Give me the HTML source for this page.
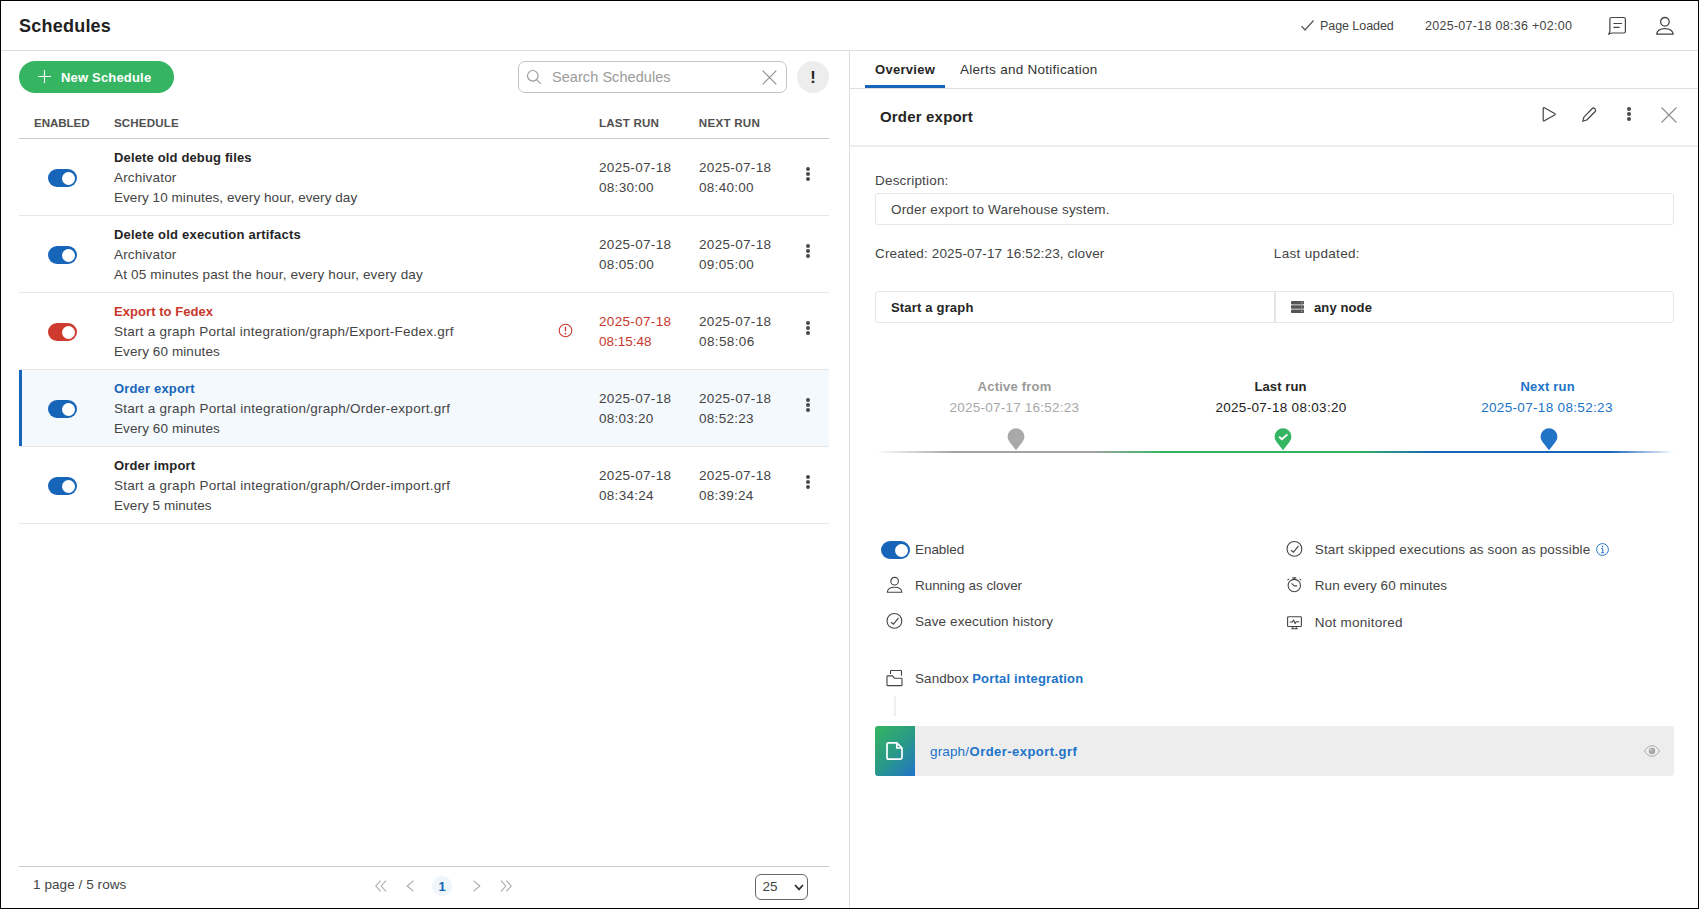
<!DOCTYPE html>
<html lang="en">
<head>
<meta charset="utf-8">
<title>Schedules</title>
<style>
*{box-sizing:border-box;margin:0;padding:0}
html,body{width:1699px;height:909px;overflow:hidden;background:#fff}
body{font-family:"Liberation Sans",sans-serif;font-size:13px;color:#3c3c3c;position:relative}
#frame{position:absolute;left:0;top:0;width:1699px;height:909px;border:1px solid #000;z-index:50;pointer-events:none}
.a{position:absolute}
.t{position:absolute;white-space:nowrap;line-height:20px;height:20px;font-size:13.5px;color:#444}
.b{font-weight:bold;color:#252525;font-size:13px}
.c{text-align:center}
.hl{position:absolute;height:1px;background:#e6e6e6}
svg{position:absolute;overflow:visible}
/* header */
#hdr{position:absolute;left:0;top:0;width:1699px;height:51px;border-bottom:1px solid #dedede}
/* left */
#vdiv{position:absolute;left:849px;top:51px;width:1px;height:858px;background:#dedede}
.btn-new{position:absolute;left:19px;top:61px;width:155px;height:32px;border-radius:16px;background:#35b561}
.search{position:absolute;left:518px;top:61px;width:269px;height:32px;border:1px solid #c4c4c4;border-radius:7px;background:#fff}
.bang{position:absolute;left:797px;top:61px;width:32px;height:32px;border-radius:16px;background:#ededed}
.th{position:absolute;top:113px;font-size:11.6px;font-weight:bold;color:#505050;line-height:20px;white-space:nowrap}
.row{position:absolute;left:19px;width:810px;height:77px;border-bottom:1px solid #e6e6e6}
.row.sel{background:#f4f9fd}
.row.sel:before{content:"";position:absolute;left:0;top:0;width:3px;height:76px;background:#1765b9}
.tg{position:absolute;width:29px;height:18px;border-radius:9px;background:#1765b9}
.tg:after{content:"";position:absolute;right:2.5px;top:2.5px;width:13px;height:13px;border-radius:6.5px;background:#fff}
.tg.red{background:#cf3a2e}
.kb{position:absolute;width:4px;height:4px;border-radius:2px;background:#4a4a4a}
</style>
</head>
<body>
<div id="frame"></div>

<!-- ===== HEADER ===== -->
<div id="hdr">
  <div class="t b" style="left:19px;top:15px;font-size:18px;line-height:22px;height:22px;color:#222;letter-spacing:0.23px">Schedules</div>
  <svg style="left:1300px;top:19px" width="15" height="13" viewBox="0 0 15 13"><path d="M1.5 7.2 L5 11 L13.5 1.5" fill="none" stroke="#555" stroke-width="1.2"/></svg>
  <div class="t" style="left:1320px;top:16px;font-size:12.5px;letter-spacing:-0.06px">Page Loaded</div>
  <div class="t" style="left:1425px;top:16px;font-size:12.5px;letter-spacing:0.28px">2025-07-18 08:36 +02:00</div>
  <svg style="left:1607px;top:16px" width="20" height="20" viewBox="0 0 20 20"><path d="M4.4 1.5 H16.9 Q18.4 1.5 18.4 3 V15.5 Q18.4 17 16.9 17 H6 Q4 17 1.6 18.3 Q2.9 16.5 2.9 14.5 V3 Q2.9 1.5 4.4 1.5 Z" fill="none" stroke="#444" stroke-width="1.2" stroke-linejoin="round"/><path d="M6.4 7.5 H15 M6.4 11.4 H12.6" stroke="#444" stroke-width="1.2" fill="none"/></svg>
  <svg style="left:1655px;top:16px" width="20" height="20" viewBox="0 0 20 20"><circle cx="9.9" cy="5.8" r="4.3" fill="none" stroke="#444" stroke-width="1.3"/><path d="M1.6 18.1 C2.2 14.6 5.6 12.6 9.9 12.6 C14.2 12.6 17.6 14.6 18.2 18.1 Z" fill="none" stroke="#444" stroke-width="1.3" stroke-linejoin="round"/></svg>
</div>

<!-- ===== LEFT PANEL ===== -->
<div id="vdiv"></div>
<div class="btn-new">
  <svg style="left:18px;top:9px" width="14" height="14" viewBox="0 0 14 14"><path d="M7.5 0 V13 M1 6.5 H14" stroke="#fff" stroke-width="1.15" fill="none"/></svg>
  <div class="t b" style="left:42px;top:7px;color:#fff;letter-spacing:0.18px">New Schedule</div>
</div>
<div class="search">
  <svg style="left:7.2px;top:7.4px" width="17" height="17" viewBox="0 0 17 17"><circle cx="6.8" cy="6.8" r="5.3" fill="none" stroke="#9c9c9c" stroke-width="1.2"/><path d="M10.6 10.6 L14.8 14.8" stroke="#9c9c9c" stroke-width="1.2"/></svg>
  <div class="t" style="left:33px;top:5px;font-size:14.5px;color:#9b9b9b;letter-spacing:0.06px">Search Schedules</div>
  <svg style="left:243px;top:8px" width="15" height="15" viewBox="0 0 15 15"><path d="M0.7 0.7 L14.3 14.3 M14.3 0.7 L0.7 14.3" stroke="#8c8c8c" stroke-width="1.1"/></svg>
</div>
<div class="bang"><div class="t b" style="left:0;width:32px;text-align:center;top:6px;font-size:16.5px;color:#222">!</div></div>

<div class="th" style="left:34px;letter-spacing:-0.07px">ENABLED</div>
<div class="th" style="left:114px;letter-spacing:0.13px">SCHEDULE</div>
<div class="th" style="left:599px;letter-spacing:0.19px">LAST RUN</div>
<div class="th" style="left:698.8px;letter-spacing:0.25px">NEXT RUN</div>
<div class="hl" style="left:19px;top:138px;width:810px;background:#c9c9c9"></div>

<div id="rows">
<div class="row" style="top:139px">
  <div class="tg" style="left:29px;top:30px"></div>
  <div class="t b" style="left:95px;top:9px;letter-spacing:0.15px">Delete old debug files</div>
  <div class="t" style="left:95px;top:29px;letter-spacing:0.17px">Archivator</div>
  <div class="t" style="left:95px;top:49px;letter-spacing:0.06px">Every 10 minutes, every hour, every day</div>
  <div class="t" style="left:580px;top:19px;letter-spacing:0.33px">2025-07-18</div>
  <div class="t" style="left:580px;top:39px;letter-spacing:0.29px">08:30:00</div>
  <div class="t" style="left:680px;top:19px;letter-spacing:0.33px">2025-07-18</div>
  <div class="t" style="left:680px;top:39px;letter-spacing:0.29px">08:40:00</div>
  <div class="kb" style="left:787px;top:28px"></div><div class="kb" style="left:787px;top:33px"></div><div class="kb" style="left:787px;top:38px"></div>
</div>
<div class="row" style="top:216px">
  <div class="tg" style="left:29px;top:30px"></div>
  <div class="t b" style="left:95px;top:9px;letter-spacing:0.21px">Delete old execution artifacts</div>
  <div class="t" style="left:95px;top:29px;letter-spacing:0.17px">Archivator</div>
  <div class="t" style="left:95px;top:49px;letter-spacing:0.16px">At 05 minutes past the hour, every hour, every day</div>
  <div class="t" style="left:580px;top:19px;letter-spacing:0.33px">2025-07-18</div>
  <div class="t" style="left:580px;top:39px;letter-spacing:0.33px">08:05:00</div>
  <div class="t" style="left:680px;top:19px;letter-spacing:0.33px">2025-07-18</div>
  <div class="t" style="left:680px;top:39px;letter-spacing:0.33px">09:05:00</div>
  <div class="kb" style="left:787px;top:28px"></div><div class="kb" style="left:787px;top:33px"></div><div class="kb" style="left:787px;top:38px"></div>
</div>
<div class="row" style="top:293px">
  <div class="tg red" style="left:29px;top:30px"></div>
  <div class="t b" style="left:95px;top:9px;color:#c8372c;letter-spacing:0.06px">Export to Fedex</div>
  <div class="t" style="left:95px;top:29px;letter-spacing:0.24px">Start a graph Portal integration/graph/Export-Fedex.grf</div>
  <div class="t" style="left:95px;top:49px;letter-spacing:0.1px">Every 60 minutes</div>
  <svg style="left:539.3px;top:30px" width="15" height="15" viewBox="0 0 15 15"><circle cx="7.5" cy="7.5" r="6.3" fill="none" stroke="#c8372c" stroke-width="1.1"/><path d="M7.5 3.8 V8.2" stroke="#c8372c" stroke-width="1.3"/><circle cx="7.5" cy="10.6" r="0.9" fill="#c8372c"/></svg>
  <div class="t" style="left:580px;top:19px;color:#c8372c;letter-spacing:0.33px">2025-07-18</div>
  <div class="t" style="left:580px;top:39px;color:#c8372c">08:15:48</div>
  <div class="t" style="left:680px;top:19px;letter-spacing:0.33px">2025-07-18</div>
  <div class="t" style="left:680px;top:39px;letter-spacing:0.39px">08:58:06</div>
  <div class="kb" style="left:787px;top:28px"></div><div class="kb" style="left:787px;top:33px"></div><div class="kb" style="left:787px;top:38px"></div>
</div>
<div class="row sel" style="top:370px">
  <div class="tg" style="left:29px;top:30px"></div>
  <div class="t b" style="left:95px;top:9px;color:#1765b9;letter-spacing:0.17px">Order export</div>
  <div class="t" style="left:95px;top:29px;letter-spacing:0.26px">Start a graph Portal integration/graph/Order-export.grf</div>
  <div class="t" style="left:95px;top:49px;letter-spacing:0.1px">Every 60 minutes</div>
  <div class="t" style="left:580px;top:19px;letter-spacing:0.33px">2025-07-18</div>
  <div class="t" style="left:580px;top:39px;letter-spacing:0.24px">08:03:20</div>
  <div class="t" style="left:680px;top:19px;letter-spacing:0.33px">2025-07-18</div>
  <div class="t" style="left:680px;top:39px;letter-spacing:0.29px">08:52:23</div>
  <div class="kb" style="left:787px;top:28px"></div><div class="kb" style="left:787px;top:33px"></div><div class="kb" style="left:787px;top:38px"></div>
</div>
<div class="row" style="top:447px">
  <div class="tg" style="left:29px;top:30px"></div>
  <div class="t b" style="left:95px;top:9px;letter-spacing:0.14px">Order import</div>
  <div class="t" style="left:95px;top:29px;letter-spacing:0.26px">Start a graph Portal integration/graph/Order-import.grf</div>
  <div class="t" style="left:95px;top:49px;letter-spacing:0.05px">Every 5 minutes</div>
  <div class="t" style="left:580px;top:19px;letter-spacing:0.33px">2025-07-18</div>
  <div class="t" style="left:580px;top:39px;letter-spacing:0.29px">08:34:24</div>
  <div class="t" style="left:680px;top:19px;letter-spacing:0.33px">2025-07-18</div>
  <div class="t" style="left:680px;top:39px;letter-spacing:0.24px">08:39:24</div>
  <div class="kb" style="left:787px;top:28px"></div><div class="kb" style="left:787px;top:33px"></div><div class="kb" style="left:787px;top:38px"></div>
</div>
</div>

<!-- footer -->
<div class="hl" style="left:19px;top:866px;width:810px;background:#c9c9c9"></div>
<div class="t" style="left:33px;top:875px;letter-spacing:0.07px">1 page / 5 rows</div>
<svg style="left:375px;top:880px" width="12" height="12" viewBox="0 0 12 12"><path d="M5.6 0.6 L0.8 6 L5.6 11.4 M11 0.6 L6.2 6 L11 11.4" fill="none" stroke="#aaa" stroke-width="1.1"/></svg>
<svg style="left:406px;top:880px" width="9" height="12" viewBox="0 0 9 12"><path d="M7.6 0.6 L1.2 6 L7.6 11.4" fill="none" stroke="#aaa" stroke-width="1.1"/></svg>
<div class="a" style="left:432px;top:876px;width:20px;height:20px;border-radius:10px;background:#eef5fb"></div>
<div class="t b" style="left:432px;width:20px;text-align:center;top:877px;color:#1765b9">1</div>
<svg style="left:472px;top:880px" width="9" height="12" viewBox="0 0 9 12"><path d="M1.4 0.6 L7.8 6 L1.4 11.4" fill="none" stroke="#aaa" stroke-width="1.1"/></svg>
<svg style="left:500px;top:880px" width="12" height="12" viewBox="0 0 12 12"><path d="M1 0.6 L5.8 6 L1 11.4 M6.4 0.6 L11.2 6 L6.4 11.4" fill="none" stroke="#aaa" stroke-width="1.1"/></svg>
<div class="a" style="left:755px;top:874px;width:53px;height:26px;border:1px solid #666;border-radius:6px;background:#fff"></div>
<div class="t" style="left:762.5px;top:877px;font-size:13.5px">25</div>
<svg style="left:794px;top:884px" width="10" height="7" viewBox="0 0 10 7"><path d="M1 1 L5 5.4 L9 1" fill="none" stroke="#333" stroke-width="1.8"/></svg>


<!-- ===== RIGHT PANEL ===== -->
<div id="right">
  <!-- tabs -->
  <div class="t b" style="left:875px;top:60px;letter-spacing:0.29px">Overview</div>
  <div class="a" style="left:865px;top:85px;width:80px;height:3px;background:#1765b9"></div>
  <div class="t" style="left:960px;top:60px;color:#333;letter-spacing:0.27px">Alerts and Notification</div>
  <div class="hl" style="left:850px;top:88px;width:848px;background:#dedede"></div>
  <!-- title bar -->
  <div class="t b" style="left:880px;top:107px;font-size:15px;letter-spacing:0.18px">Order export</div>
  <svg style="left:1541px;top:106px" width="17" height="17" viewBox="0 0 17 17"><path d="M2.2 2.6 Q2.2 1.2 3.4 1.8 L13.6 7.6 Q14.8 8.3 13.6 9 L3.4 14.8 Q2.2 15.4 2.2 14 Z" fill="none" stroke="#444" stroke-width="1.2" stroke-linejoin="round"/></svg>
  <svg style="left:1581px;top:106px" width="17" height="17" viewBox="0 0 17 17"><path d="M1.7 15.3 L2.9 11.2 L11.3 2.5 Q12.4 1.5 13.5 2.5 L14.3 3.3 Q15.2 4.4 14.2 5.5 L5.8 14 Z" fill="none" stroke="#444" stroke-width="1.2" stroke-linejoin="round"/></svg>
  <div class="kb" style="left:1626.6px;top:107.4px"></div><div class="kb" style="left:1626.6px;top:112.4px"></div><div class="kb" style="left:1626.6px;top:117.4px"></div>
  <svg style="left:1661.2px;top:106.6px" width="16" height="16" viewBox="0 0 16 16"><path d="M0.5 0.5 L15.5 15.5 M15.5 0.5 L0.5 15.5" stroke="#8a8a8a" stroke-width="1.1"/></svg>
  <div class="hl" style="left:850px;top:145px;width:848px;height:2px;background:#ededed"></div>
  <!-- description -->
  <div class="t" style="left:875px;top:171px;letter-spacing:0.19px">Description:</div>
  <div class="a" style="left:875px;top:193px;width:799px;height:32px;border:1px solid #e6e6e6;border-radius:3px"></div>
  <div class="t" style="left:891px;top:200px;letter-spacing:0.16px">Order export to Warehouse system.</div>
  <div class="t" style="left:875px;top:244px;letter-spacing:0.14px">Created: 2025-07-17 16:52:23, clover</div>
  <div class="t" style="left:1273.8px;top:244px;letter-spacing:0.33px">Last updated:</div>
  <!-- type box -->
  <div class="a" style="left:875px;top:291px;width:799px;height:32px;border:1px solid #e6e6e6;border-radius:3px"></div>
  <div class="a" style="left:1274px;top:291px;width:2px;height:32px;background:#e6e6e6"></div>
  <div class="t b" style="left:891px;top:298px;letter-spacing:0.18px">Start a graph</div>
  <svg style="left:1291px;top:301px" width="13" height="12" viewBox="0 0 13 12"><rect x="0" y="0" width="13" height="3.4" rx="0.8" fill="#555"/><rect x="0" y="4.3" width="13" height="3.4" rx="0.8" fill="#555"/><rect x="0" y="8.6" width="13" height="3.4" rx="0.8" fill="#555"/><circle cx="10.8" cy="1.7" r="0.6" fill="#ccc"/><circle cx="10.8" cy="6" r="0.6" fill="#ccc"/><circle cx="10.8" cy="10.3" r="0.6" fill="#ccc"/></svg>
  <div class="t b" style="left:1314px;top:298px;letter-spacing:0.12px">any node</div>
  <!-- timeline -->
  <div class="t b c" style="left:914.6px;width:200px;top:377px;color:#9a9a9a;letter-spacing:0.22px">Active from</div>
  <div class="t c" style="left:914.4px;width:200px;top:398px;color:#a8a8a8;letter-spacing:0.22px">2025-07-17 16:52:23</div>
  <div class="t b c" style="left:1180.5px;width:200px;top:377px;letter-spacing:0.1px">Last run</div>
  <div class="t c" style="left:1181px;width:200px;top:398px;color:#222;letter-spacing:0.31px">2025-07-18 08:03:20</div>
  <div class="t b c" style="left:1447.7px;width:200px;top:377px;color:#2173c8;letter-spacing:0.23px">Next run</div>
  <div class="t c" style="left:1447px;width:200px;top:398px;color:#2173c8;letter-spacing:0.33px">2025-07-18 08:52:23</div>
  <div class="a" style="left:875px;top:451px;width:799px;height:2px;background:linear-gradient(90deg,rgba(163,163,163,0) 0%,#a3a3a3 10%,#a3a3a3 27%,#35b561 36%,#35b561 60%,#1765b9 70%,#1765b9 92%,rgba(27,101,189,0) 100%)"></div>
  <svg style="left:1007.2px;top:428px" width="18" height="22" viewBox="0 0 18 22"><path d="M9 22.2 L2.39 13.79 A8.4 8.4 0 1 1 15.61 13.79 Z" fill="#a9a9a9"/></svg>
  <svg style="left:1273.6px;top:428px" width="18" height="22" viewBox="0 0 18 22"><path d="M9 22.2 L2.39 13.79 A8.4 8.4 0 1 1 15.61 13.79 Z" fill="#35b561"/><path d="M5.1 8.7 L8 11.3 L13.4 6.4" fill="none" stroke="#fff" stroke-width="1.9"/></svg>
  <svg style="left:1540.2px;top:428px" width="18" height="22" viewBox="0 0 18 22"><path d="M9 22.2 L2.39 13.79 A8.4 8.4 0 1 1 15.61 13.79 Z" fill="#2173c8"/></svg>
  <!-- options left -->
  <div class="tg" style="left:881px;top:541px"></div>
  <div class="t" style="left:915px;top:540px;letter-spacing:-0.06px">Enabled</div>
  <svg style="left:886px;top:577px" width="17" height="17" viewBox="0 0 17 17"><circle cx="8.6" cy="4.2" r="3.8" fill="none" stroke="#444" stroke-width="1.1"/><path d="M1.3 15.3 C1.5 12 4.6 10.2 8.6 10.2 C12.6 10.2 15.7 12 15.9 15.3 Z" fill="none" stroke="#444" stroke-width="1.1" stroke-linejoin="round"/></svg>
  <div class="t" style="left:915px;top:576px;letter-spacing:-0.06px">Running as clover</div>
  <svg style="left:886px;top:613px" width="17" height="17" viewBox="0 0 17 17"><circle cx="8.4" cy="7.9" r="7.4" fill="none" stroke="#444" stroke-width="1.1"/><path d="M4.9 9.2 L7.5 11.2 L12.5 4.8" fill="none" stroke="#444" stroke-width="1.1"/></svg>
  <div class="t" style="left:915px;top:612px;letter-spacing:0.1px">Save execution history</div>
  <!-- options right -->
  <svg style="left:1286px;top:541px" width="17" height="17" viewBox="0 0 17 17"><circle cx="8.4" cy="7.9" r="7.4" fill="none" stroke="#444" stroke-width="1.1"/><path d="M4.9 9.2 L7.5 11.2 L12.5 4.8" fill="none" stroke="#444" stroke-width="1.1"/></svg>
  <div class="t" style="left:1314.8px;top:540px;letter-spacing:0.14px">Start skipped executions as soon as possible</div>
  <svg style="left:1596px;top:543px" width="13" height="13" viewBox="0 0 13 13"><circle cx="6.5" cy="6.5" r="5.9" fill="none" stroke="#2173c8" stroke-width="1"/><circle cx="6.5" cy="3.6" r="0.8" fill="#2173c8"/><path d="M5.3 5.6 H6.8 V9.6 M5.2 9.7 H8.2" fill="none" stroke="#2173c8" stroke-width="1"/></svg>
  <svg style="left:1286px;top:577px" width="16" height="17" viewBox="0 0 16 17"><circle cx="8.3" cy="8.6" r="6.2" fill="none" stroke="#444" stroke-width="1.1"/><path d="M6.3 0.9 H10.3 M8.3 0.9 V2.4 M5.5 6.4 L8.3 8.9 H11.2 M1.5 3.1 L3 1.9 M15.1 3.1 L13.6 1.9" fill="none" stroke="#444" stroke-width="1.1"/></svg>
  <div class="t" style="left:1314.8px;top:576px;letter-spacing:0.05px">Run every 60 minutes</div>
  <svg style="left:1287px;top:616px" width="15" height="14" viewBox="0 0 15 14"><rect x="0.6" y="0.8" width="13.8" height="9.7" rx="0.8" fill="none" stroke="#444" stroke-width="1.1"/><path d="M6 10.5 L5.6 12.6 M9 10.5 L9.4 12.6 M4.2 12.8 H10.8 M2.8 6 H5.4 L6.6 4 L8.2 7.6 L9.2 5.8 H12.2" fill="none" stroke="#444" stroke-width="1.1" stroke-linejoin="round"/></svg>
  <div class="t" style="left:1314.8px;top:613px;letter-spacing:0.25px">Not monitored</div>
  <!-- sandbox -->
  <svg style="left:886px;top:670px" width="17" height="17" viewBox="0 0 17 17"><path d="M1.7 5.9 H6.6 L8.4 8.2 H15.3 Q16 8.2 16 8.9 V14.9 Q16 15.6 15.3 15.6 H1.7 Q1 15.6 1 14.9 V6.6 Q1 5.9 1.7 5.9 Z M4.5 4 V1.2 Q4.5 0.5 5.2 0.5 H14.8 Q15.5 0.5 15.5 1.2 V5.8" fill="none" stroke="#444" stroke-width="1.1" stroke-linejoin="round"/></svg>
  <div class="t" style="left:915px;top:669px;letter-spacing:0.06px">Sandbox</div>
  <div class="t b" style="left:972.2px;top:669px;color:#2173c8;letter-spacing:0.2px">Portal integration</div>
  <div class="a" style="left:894px;top:696px;width:2px;height:20px;background:#efefef"></div>
  <!-- file bar -->
  <div class="a" style="left:875px;top:726px;width:799px;height:50px;background:#ededed;border-radius:3px"></div>
  <div class="a" style="left:875px;top:726px;width:40px;height:50px;border-radius:3px 0 0 3px;background:linear-gradient(135deg,#35b561 0%,#2a9a86 50%,#2173c8 100%)"></div>
  <svg style="left:886px;top:742px" width="17" height="18" viewBox="0 0 17 18"><path d="M1 2.4 Q1 0.8 2.6 0.8 H10.8 L16 6 V15.6 Q16 17.2 14.4 17.2 H2.6 Q1 17.2 1 15.6 Z M10.8 0.8 V6 H16" fill="none" stroke="#fff" stroke-width="1.7" stroke-linejoin="round"/></svg>
  <div class="t" style="left:930px;top:742px;color:#2173c8;letter-spacing:0.15px">graph/</div>
  <div class="t b" style="left:969.6px;top:742px;color:#2173c8;letter-spacing:0.45px">Order-export.grf</div>
  <svg style="left:1644px;top:745px" width="16" height="12" viewBox="0 0 16 12"><path d="M0.6 6 C3 1.6 6 0.8 8 0.8 C10 0.8 13 1.6 15.4 6 C13 10.4 10 11.2 8 11.2 C6 11.2 3 10.4 0.6 6 Z" fill="none" stroke="#a6a6a6" stroke-width="1"/><circle cx="8" cy="6" r="3.2" fill="#a6a6a6"/><circle cx="7" cy="5" r="0.9" fill="#d8d8d8"/></svg>
</div>

</body>
</html>
